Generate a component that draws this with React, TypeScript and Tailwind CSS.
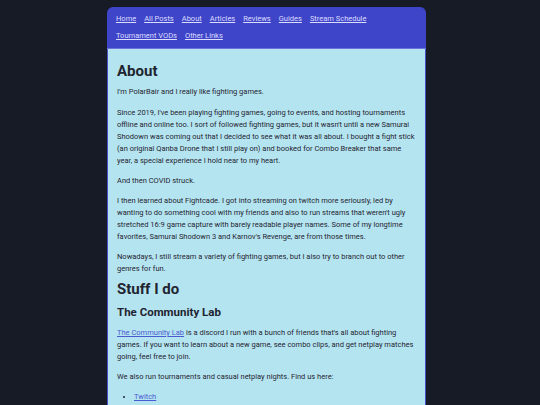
const navLinks = ['Home', 'All Posts', 'About', 'Articles', 'Reviews', 'Guides', 'Stream Schedule', 'Tournament VODs', 'Other Links'];

export default function App() {
  return (
    <div className="min-h-[405px] bg-[#161b26] pt-[7px] font-['Roboto',sans-serif] text-[7.5px] leading-[12px] text-[#1f2430]">
      <div className="ml-[107px] w-[319px] overflow-hidden rounded-t-[6px]">
        <nav className="flex flex-wrap gap-x-[8px] gap-y-[5px] border-b border-[#6d73d8] bg-[#3f45c8] px-[9px] pt-[6px] pb-[6px]">
          {navLinks.map((l) => (
            <a key={l} href="#" className="text-[#dcdcff] underline">
              {l}
            </a>
          ))}
        </nav>
        <main className="border-x border-[#4a50c8] bg-[#b5e4f1] pl-[9px] pr-[8px] pt-[13px]">
          <h1 className="mb-[6px] text-[15px] leading-[18px] font-bold">About</h1>
          <p className="mb-[9px]">I'm PolarBair and I really like fighting games.</p>
          <p className="mb-[8px]">
            Since 2019, I've been playing fighting games, going to events, and hosting tournaments offline and online too. I sort of followed fighting games, but it wasn't until a new Samurai Shodown was coming out that I decided to see what it was all about. I bought a fight stick (an original Qanba Drone that I still play on) and booked for Combo Breaker that same year, a special experience I hold near to my heart.
          </p>
          <p className="mb-[8px]">And then COVID struck.</p>
          <p className="mb-[8px]">
            I then learned about Fightcade. I got into streaming on twitch more seriously, led by wanting to do something cool with my friends and also to run streams that weren't ugly stretched 16:9 game capture with barely readable player names. Some of my longtime favorites, Samurai Shodown 3 and Karnov's Revenge, are from those times.
          </p>
          <p className="mb-[5px]">
            Nowadays, I still stream a variety of fighting games, but I also try to branch out to other genres for fun.
          </p>
          <h1 className="mb-[7px] text-[15px] leading-[18px] font-bold">Stuff I do</h1>
          <h2 className="mb-[8px] text-[11.5px] leading-[14px] font-bold">The Community Lab</h2>
          <p className="mb-[8px]">
            <a href="#" className="text-[#4a5ad0] underline">The Community Lab</a> is a discord I run with a bunch of friends that's all about fighting games. If you want to learn about a new game, see combo clips, and get netplay matches going, feel free to join.
          </p>
          <p className="mb-[8px]">We also run tournaments and casual netplay nights. Find us here:</p>
          <ul className="list-disc pl-[17px] pb-[20px]">
            <li>
              <a href="#" className="text-[#4a5ad0] underline">Twitch</a>
            </li>
          </ul>
        </main>
      </div>
    </div>
  );
}
